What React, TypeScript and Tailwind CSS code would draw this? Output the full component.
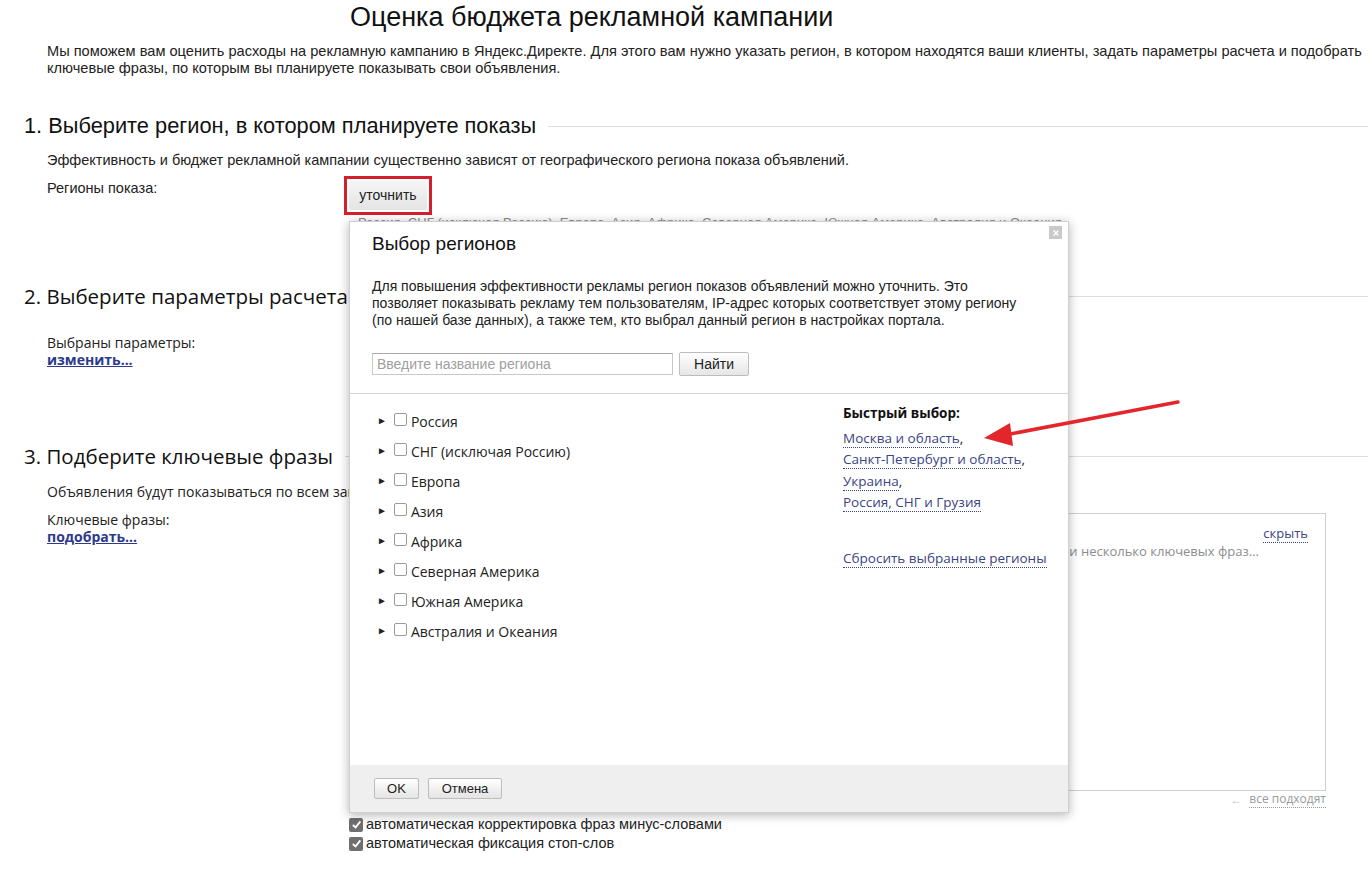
import React from "react";

const regions = [
  "Россия",
  "СНГ (исключая Россию)",
  "Европа",
  "Азия",
  "Африка",
  "Северная Америка",
  "Южная Америка",
  "Австралия и Океания",
];

const quick = ["Москва и область", "Санкт-Петербург и область", "Украина", "Россия, СНГ и Грузия"];

function SectionTitle({ children, className = "" }: { children: React.ReactNode; className?: string }) {
  return (
    <div className={`flex items-center ${className}`}>
      <h2 className="shrink-0 text-[21.8px] leading-[26px] text-[#111]">{children}</h2>
      <div className="ml-3 h-px flex-1 bg-[#dedede]" />
    </div>
  );
}

function CheckedBox() {
  return (
    <span className="flex h-[14px] w-[14px] items-center justify-center rounded-[2px] bg-[#6f6f6f]">
      <svg viewBox="0 0 12 12" className="h-[11px] w-[11px]">
        <path d="M2 6.5 L5 9.2 L10.2 2.6" fill="none" stroke="#fff" strokeWidth="2" />
      </svg>
    </span>
  );
}

function Dialog() {
  return (
    <div className="absolute left-[349px] top-[221px] flex h-[592px] w-[720px] flex-col border border-[#cfcfcf] bg-white shadow-[0_2px_10px_rgba(0,0,0,0.3)]">
      {/* close */}
      <span className="absolute right-[6px] top-[4px] flex h-[13px] w-[13px] items-center justify-center bg-[#c9c9c9]">
        <svg viewBox="0 0 10 10" className="h-[8px] w-[8px]">
          <path d="M2 2 L8 8 M8 2 L2 8" stroke="#fff" strokeWidth="1.8" />
        </svg>
      </span>

      <div className="px-[22px]">
        <div className="pt-[10px] text-[19px] leading-[24px] text-[#111]">Выбор регионов</div>
        <p className="mt-[22px] text-[14px] leading-[17px] text-[#222]">
          Для повышения эффективности рекламы регион показов объявлений можно уточнить. Это
          <br />
          позволяет показывать рекламу тем пользователям, IP-адрес которых соответствует этому региону
          <br />
          (по нашей базе данных), а также тем, кто выбрал данный регион в настройках портала.
        </p>
        <div className="mt-[23px] flex items-center gap-[6px]">
          <input
            placeholder="Введите название региона"
            className="h-[22px] w-[301px] border border-[#c8c8c8] border-t-[#a9a9a9] px-[4px] text-[14px] text-[#333] placeholder:text-[#a0a0a0] outline-none"
          />
          <button className="h-[24px] w-[70px] rounded-[2px] border border-[#bdbdbd] bg-gradient-to-b from-white to-[#e6e6e6] text-[14px] text-[#222]">
            Найти
          </button>
        </div>
      </div>

      <div className="mt-[17px] h-px bg-[#d6d6d6]" />

      <div className="flex flex-1 pt-[12px]">
        <ul className="w-[470px] pl-[27px] font-['Open_Sans',sans-serif] text-[14px] text-[#222]">
          {regions.map((r) => (
            <li key={r} className="flex h-[30px] items-center">
              <span className="mr-[7px] -translate-y-[1px] text-[10px] leading-none text-[#222]">►</span>
              <span className="mr-[4px] h-[13px] w-[13px] -translate-y-[2px] rounded-[2px] border border-[#9a9a9a] bg-white" />
              <span>{r}</span>
            </li>
          ))}
        </ul>
        <div className="-mt-[3px] pl-[23px] font-['Open_Sans',sans-serif] text-[13.5px] leading-[21.6px]">
          <div className="font-bold text-[#111]">Быстрый выбор:</div>
          <div className="mt-[3px]">
            {quick.map((q, i) => (
              <div key={q} className="text-[#3a4484]">
                <span className="border-b border-dotted border-[#3a4484]">{q}</span>
                {i < quick.length - 1 && <span className="text-[#222]">,</span>}
              </div>
            ))}
          </div>
          <div className="mt-[34px] text-[#3a4484]">
            <span className="border-b border-dotted border-[#3a4484]">Сбросить выбранные регионы</span>
          </div>
        </div>
      </div>

      <div className="flex h-[47px] items-center gap-[9px] bg-[#efefef] pl-[24px]">
        <button className="h-[21px] w-[45px] rounded-[2px] border border-[#bdbdbd] bg-gradient-to-b from-white to-[#e4e4e4] text-[13px] text-[#222]">
          OK
        </button>
        <button className="h-[21px] w-[74px] rounded-[2px] border border-[#bdbdbd] bg-gradient-to-b from-white to-[#e4e4e4] text-[13px] text-[#222]">
          Отмена
        </button>
      </div>
    </div>
  );
}

export default function App() {
  return (
    <div className="relative min-h-[870px] w-[1368px] overflow-hidden bg-white font-['Liberation_Sans',Arial,sans-serif] text-[#111]">
      <h1 className="ml-[350px] pt-[2px] text-[27px] leading-[30px] text-[#111]">Оценка бюджета рекламной кампании</h1>
      <p className="ml-[47px] mt-[11px] whitespace-nowrap text-[14.6px] leading-[17px] text-[#222]">
        Мы поможем вам оценить расходы на рекламную кампанию в Яндекс.Директе. Для этого вам нужно указать регион, в котором находятся ваши клиенты, задать параметры расчета и подобрать
        <br />
        ключевые фразы, по которым вы планируете показывать свои объявления.
      </p>

      {/* 1 */}
      <SectionTitle className="ml-[24px] mt-[36px]">1. Выберите регион, в котором планируете показы</SectionTitle>
      <p className="ml-[47px] mt-[13px] text-[14.5px] leading-[17px] text-[#222]">
        Эффективность и бюджет рекламной кампании существенно зависят от географического региона показа объявлений.
      </p>
      <div className="ml-[47px] mt-[7px] flex">
        <div className="w-[297px] pt-[4px] text-[14.5px] leading-[17px] text-[#222]">Регионы показа:</div>
        <div>
          <div className="inline-block border-[3px] border-[#d4202c] p-[2px]">
            <button className="h-[29px] w-[78px] rounded-[2px] bg-gradient-to-b from-[#f5f5f5] to-[#e4e4e4] text-[14px] text-[#222]">
              уточнить
            </button>
          </div>
          <div className="ml-[14px] text-[13px] leading-[16px] text-[#8a8a8a]">
            Россия, СНГ (исключая Россию), Европа, Азия, Африка, Северная Америка, Южная Америка, Австралия и Океания
          </div>
        </div>
      </div>

      {/* 2 */}
      <SectionTitle className="ml-[24px] mt-[52px]">
        <span className="font-['Open_Sans',sans-serif] text-[20.5px]">2. Выберите параметры расчета</span>
      </SectionTitle>
      <div className="ml-[47px] mt-[24px] font-['Open_Sans',sans-serif] text-[14px] leading-[17px] text-[#222]">
        <div>Выбраны параметры:</div>
        <a className="font-bold text-[#2d3a8c] underline">изменить...</a>
      </div>

      {/* 3 */}
      <SectionTitle className="ml-[24px] mt-[75px]">
        <span className="font-['Open_Sans',sans-serif] text-[20.5px]">3. Подберите ключевые фразы</span>
      </SectionTitle>
      <p className="ml-[47px] mt-[13px] w-[302px] overflow-hidden whitespace-nowrap font-['Open_Sans',sans-serif] text-[14px] leading-[17px] text-[#222]">
        Объявления будут показываться по всем запросам, содержащим выбранные ключевые фразы.
      </p>
      <div className="ml-[47px] mt-[8px] flex">
        <div className="w-[303px] pt-[3px] font-['Open_Sans',sans-serif] text-[14px] leading-[17px] text-[#222]">
          <div>Ключевые фразы:</div>
          <a className="font-bold text-[#2d3a8c] underline">подобрать...</a>
        </div>
        <div className="pt-[5px]">
          <div className="flex h-[278px] w-[976px] flex-col items-end border border-[#d0d0d0] font-['Open_Sans',sans-serif]">
            <div className="pr-[17px] pt-[10px] text-[13px] leading-[18px]">
              <span className="border-b border-dotted border-[#3a4484] text-[#3a4484]">скрыть</span>
            </div>
            <div className="mr-[66px] flex w-[190px] justify-end overflow-hidden whitespace-nowrap text-[13px] leading-[18px] text-[#8d8d8d]">
              <span className="shrink-0">Введите одну или несколько ключевых фраз...</span>
            </div>
          </div>
          <div className="flex items-center justify-end font-['Open_Sans',sans-serif] text-[12px] leading-[16px] text-[#9a9a9a]">
            <span className="mr-[7px] text-[12px] text-[#c8c8c8]">←</span>
            <span className="border-b border-dotted border-[#9a9a9a]">все подходят</span>
          </div>
          <div className="-ml-[1px] mt-[7px] text-[14.5px] leading-[19px] text-[#222]">
            <div className="flex items-center gap-[3px]">
              <CheckedBox />
              <span>автоматическая корректировка фраз минус-словами</span>
            </div>
            <div className="flex items-center gap-[3px]">
              <CheckedBox />
              <span>автоматическая фиксация стоп-слов</span>
            </div>
          </div>
        </div>
      </div>

      <Dialog />

      {/* red arrow */}
      <svg className="absolute left-[975px] top-[390px]" width="215" height="65" viewBox="0 0 215 65">
        <path d="M203 12 L30 45" stroke="#e3262b" strokeWidth="3.5" strokeLinecap="round" />
        <path d="M9 48 L35 33 L38 56 Z" fill="#e3262b" />
      </svg>
    </div>
  );
}
